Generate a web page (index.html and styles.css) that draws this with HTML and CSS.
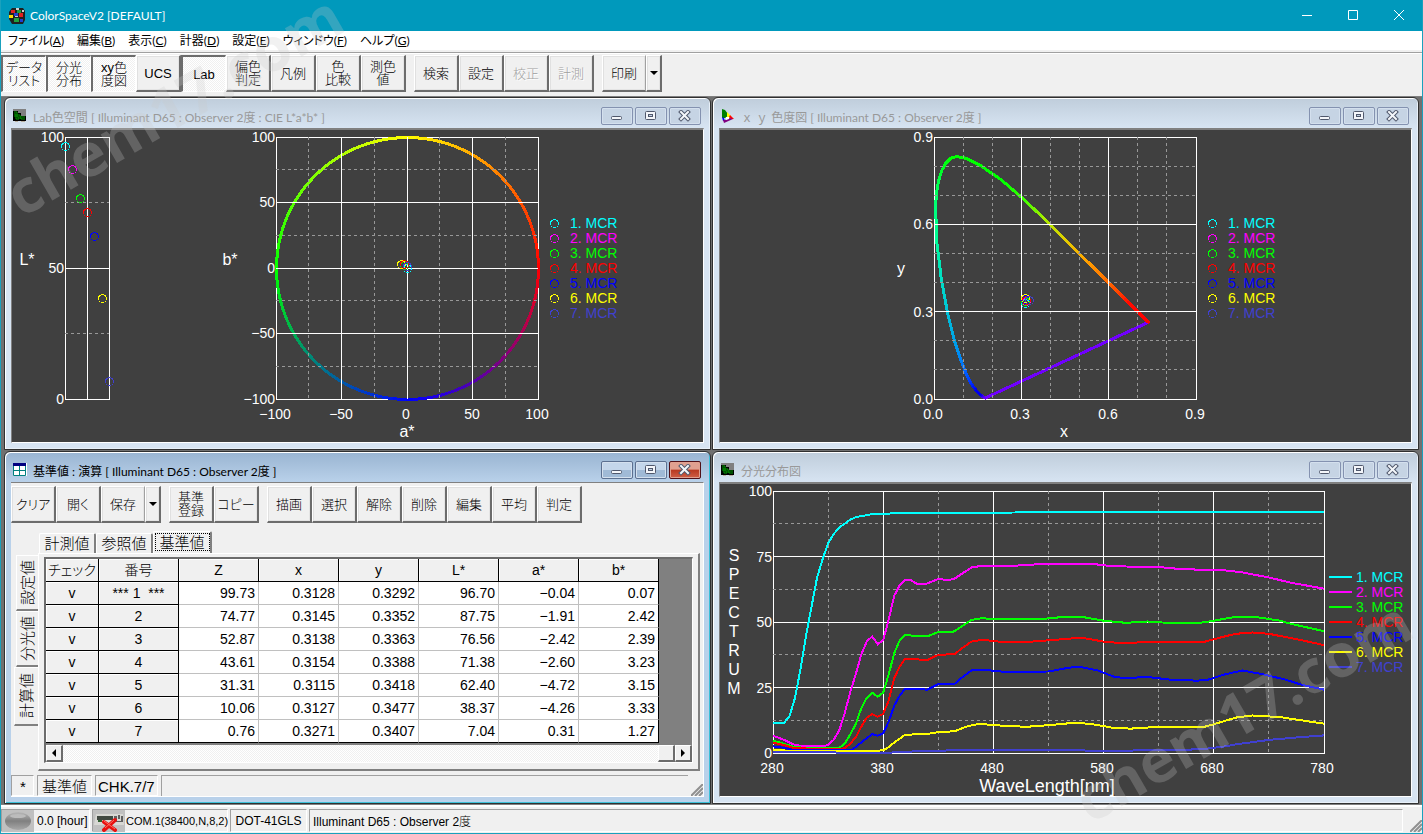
FILE: index.html
```html
<!DOCTYPE html>
<html lang="ja">
<head>
    <meta charset="UTF-8">
    <meta name="viewport" content="width=device-width, initial-scale=1.0">
    <title>ColorSpaceV2 [DEFAULT]</title>
    <link rel="stylesheet" href="styles.css">
</head>
<body>
    <!-- Shared icons -->
    <svg class="defs" width="0" height="0" aria-hidden="true">
        <symbol id="icoPlot" viewBox="0 0 14 14">
            <path fill="#808080" d="M0 0h13v12H0z"/>
            <path fill="#000" d="M0 2h5v2h3v3h5v5H0z"/>
            <path fill="none" stroke="#00a000" stroke-width="1" d="M1 3h3v3h3v2h5M1 7h4v2h3v1h4M1 5h2v5h3"/>
            <path fill="#b8b0a0" d="M2 12h3v1H2zM8 12h4v1H8z"/>
        </symbol>
        <symbol id="icoXy" viewBox="0 0 14 14">
            <path fill="#008000" d="M1 0l3 1 3 4 0 2-3 2-3 0z"/>
            <path fill="#ff0" d="M6 3l4 4-1 2-3-1z"/>
            <path fill="#f00" d="M9 6l4 4-3 0-2-2z"/>
            <path fill="#00f" d="M1 8l2 1 1 3-2 0z"/>
            <path fill="#800080" d="M2 11l2 0 5-2 3 1-9 4z"/>
            <path fill="#fff" d="M5 8l3 0 0 2-3 1z"/>
        </symbol>
        <symbol id="icoTable" viewBox="0 0 14 14">
            <path fill="#fff" d="M0 0h14v13H0z"/>
            <path fill="#000080" d="M0 0h13v3H0z"/>
            <path fill="none" stroke="#008080" d="M.5 3v9.500h12V3M6.500 3v9M1 7.500h12"/>
        </symbol>
        <symbol id="icoMin" viewBox="0 0 14 12">
            <rect x="1.500" y="6.500" width="10" height="3" rx="1" fill="#f4f6fa" stroke="#50586c"/>
        </symbol>
        <symbol id="icoMax" viewBox="0 0 14 12">
            <rect x="1.500" y="1.500" width="10" height="8" rx="1" fill="#f4f6fa" stroke="#50586c"/>
            <rect x="4.500" y="4.500" width="4" height="2" fill="#c4d2e4" stroke="#50586c"/>
        </symbol>
        <symbol id="icoClose" viewBox="0 0 14 12">
            <path d="M3 2l7 7M10 2l-7 7" stroke="#50586c" stroke-width="4" stroke-linecap="square"/>
            <path d="M3 2l7 7M10 2l-7 7" stroke="#f4f6fa" stroke-width="2" stroke-linecap="square"/>
        </symbol>
    </svg>

    <div class="app">
        <header class="titlebar">
            <svg class="app-icon" width="16" height="16" viewBox="0 0 16 16" aria-hidden="true">
                <path fill="#202020" d="M3 0h11l2 3v9l-2 4H3L0 11V4z"/>
                <path fill="#e02020" d="M2 2h4v3H2zM10 5h4v4h-4z"/>
                <path fill="#20a040" d="M8 2h4v3H8zM5 10h5v4H5z"/>
                <path fill="#2040d0" d="M5 5h4v3H5zM11 11h3v3h-3z"/>
                <path fill="#ffe000" d="M0 7h4v3H0z"/>
                <path fill="#d0d0d0" d="M7 0h3v2H7zM6 8h3v1H6zM13 2h2v2h-2z"/>
            </svg>
            <h1>ColorSpaceV2 [DEFAULT]</h1>
            <div class="window-controls">
                <button type="button" aria-label="最小化"><svg width="11" height="11"><path d="M0 5.500h10"/></svg></button>
                <button type="button" aria-label="最大化"><svg width="11" height="11"><path d="M.5.5h9v9h-9z"/></svg></button>
                <button type="button" aria-label="閉じる"><svg width="11" height="11"><path d="M0 0l10 10M10 0L0 10"/></svg></button>
            </div>
        </header>

        <nav class="menubar">
            <a href="#">ファイル(<u>A</u>)</a>
            <a href="#">編集(<u>B</u>)</a>
            <a href="#">表示(<u>C</u>)</a>
            <a href="#">計器(<u>D</u>)</a>
            <a href="#">設定(<u>E</u>)</a>
            <a href="#">ウィンドウ(<u>F</u>)</a>
            <a href="#">ヘルプ(<u>G</u>)</a>
        </nav>

        <div class="toolbar main-toolbar">
            <div class="group">
                <button type="button" class="pressed">データ<br>リスト</button>
                <button type="button" class="pressed">分光<br>分布</button>
                <button type="button" class="pressed">xy色<br>度図</button>
                <button type="button">UCS</button>
                <button type="button" class="pressed">Lab</button>
                <button type="button">偏色<br>判定</button>
                <button type="button">凡例</button>
                <button type="button">色<br>比較</button>
                <button type="button">測色<br>値</button>
            </div>
            <div class="group">
                <button type="button">検索</button>
                <button type="button">設定</button>
                <button type="button" disabled>校正</button>
                <button type="button" disabled>計測</button>
            </div>
            <div class="group">
                <button type="button" class="split">印刷</button>
                <button type="button" class="drop" aria-label="印刷メニュー"></button>
            </div>
        </div>

        <main class="workspace">
            <section class="window">
                <div class="window-title">
                    <svg width="14" height="14"><use href="#icoPlot"/></svg>
                    <h2>Lab色空間 [ Illuminant D65 : Observer 2度 : CIE L*a*b* ]</h2>
                    <div class="controls">
                        <button type="button" aria-label="最小化"><svg width="14" height="12"><use href="#icoMin"/></svg></button>
                        <button type="button" aria-label="最大化"><svg width="14" height="12"><use href="#icoMax"/></svg></button>
                        <button type="button" class="close" aria-label="閉じる"><svg width="14" height="12"><use href="#icoClose"/></svg></button>
                    </div>
                </div>
                <div class="window-body plot"><svg id="labChart" viewBox="0 0 691 312" preserveAspectRatio="xMinYMin meet"></svg></div>
            </section>

            <section class="window">
                <div class="window-title">
                    <svg width="14" height="14"><use href="#icoXy"/></svg>
                    <h2>ｘ ｙ 色度図 [ Illuminant D65 : Observer 2度 ]</h2>
                    <div class="controls">
                        <button type="button" aria-label="最小化"><svg width="14" height="12"><use href="#icoMin"/></svg></button>
                        <button type="button" aria-label="最大化"><svg width="14" height="12"><use href="#icoMax"/></svg></button>
                        <button type="button" class="close" aria-label="閉じる"><svg width="14" height="12"><use href="#icoClose"/></svg></button>
                    </div>
                </div>
                <div class="window-body plot"><svg id="xyChart" viewBox="0 0 691 312" preserveAspectRatio="xMinYMin meet"></svg></div>
            </section>

            <section class="window active">
                <div class="window-title">
                    <svg width="14" height="14"><use href="#icoTable"/></svg>
                    <h2>基準値 : 演算 [ Illuminant D65 : Observer 2度 ]</h2>
                    <div class="controls">
                        <button type="button" aria-label="最小化"><svg width="14" height="12"><use href="#icoMin"/></svg></button>
                        <button type="button" aria-label="最大化"><svg width="14" height="12"><use href="#icoMax"/></svg></button>
                        <button type="button" class="close" aria-label="閉じる"><svg width="14" height="12"><use href="#icoClose"/></svg></button>
                    </div>
                </div>
                <div class="window-body data">
                    <div class="toolbar">
                        <div class="group">
                            <button type="button">クリア</button>
                            <button type="button">開く</button>
                            <button type="button" class="split">保存</button>
                            <button type="button" class="drop" aria-label="保存メニュー"></button>
                        </div>
                        <div class="group">
                            <button type="button">基準<br>登録</button>
                            <button type="button">コピー</button>
                        </div>
                        <div class="group">
                            <button type="button">描画</button>
                            <button type="button">選択</button>
                            <button type="button">解除</button>
                            <button type="button">削除</button>
                            <button type="button">編集</button>
                            <button type="button">平均</button>
                            <button type="button">判定</button>
                        </div>
                    </div>

                    <div class="tab-area">
                        <div class="tabs" role="tablist">
                            <button type="button" role="tab">計測値</button>
                            <button type="button" role="tab">参照値</button>
                            <button type="button" role="tab" class="selected" aria-selected="true">基準値</button>
                        </div>
                        <div class="side-tabs" role="tablist">
                            <button type="button" role="tab"><span>設定値</span></button>
                            <button type="button" role="tab"><span>分光値</span></button>
                            <button type="button" role="tab" class="selected" aria-selected="true"><span>計算値</span></button>
                        </div>
                        <div class="panel">
                            <div class="sheet">
                                <table>
                                    <thead>
                                        <tr><th class="check">チェック</th><th>番号</th><th>Z</th><th>x</th><th>y</th><th>L*</th><th>a*</th><th>b*</th></tr>
                                    </thead>
                                    <tbody>
                                        <tr><th>v</th><th>*** 1 &nbsp;***</th><td>99.73</td><td>0.3128</td><td>0.3292</td><td>96.70</td><td>−0.04</td><td>0.07</td></tr>
                                        <tr><th>v</th><th>2</th><td>74.77</td><td>0.3145</td><td>0.3352</td><td>87.75</td><td>−1.91</td><td>2.42</td></tr>
                                        <tr><th>v</th><th>3</th><td>52.87</td><td>0.3138</td><td>0.3363</td><td>76.56</td><td>−2.42</td><td>2.39</td></tr>
                                        <tr><th>v</th><th>4</th><td>43.61</td><td>0.3154</td><td>0.3388</td><td>71.38</td><td>−2.60</td><td>3.23</td></tr>
                                        <tr><th>v</th><th>5</th><td>31.31</td><td>0.3115</td><td>0.3418</td><td>62.40</td><td>−4.72</td><td>3.15</td></tr>
                                        <tr><th>v</th><th>6</th><td>10.06</td><td>0.3127</td><td>0.3477</td><td>38.37</td><td>−4.26</td><td>3.33</td></tr>
                                        <tr><th>v</th><th>7</th><td>0.76</td><td>0.3271</td><td>0.3407</td><td>7.04</td><td>0.31</td><td>1.27</td></tr>
                                    </tbody>
                                </table>
                                <div class="scrollbar">
                                    <button type="button" aria-label="左へ"><i class="arrow left"></i></button>
                                    <div class="track"></div>
                                    <div class="thumb"></div>
                                    <button type="button" aria-label="右へ"><i class="arrow right"></i></button>
                                </div>
                            </div>
                        </div>
                    </div>

                    <div class="sheet-status">
                        <span class="mark">*</span>
                        <span>基準値</span>
                        <span class="chk">CHK.7/7</span>
                        <span class="rest"></span>
                        <svg class="grip" width="12" height="12"><path d="M0 12L12 0M4 12l8-8M8 12l4-4"/></svg>
                    </div>
                </div>
            </section>

            <section class="window">
                <div class="window-title">
                    <svg width="14" height="14"><use href="#icoPlot"/></svg>
                    <h2>分光分布図</h2>
                    <div class="controls">
                        <button type="button" aria-label="最小化"><svg width="14" height="12"><use href="#icoMin"/></svg></button>
                        <button type="button" aria-label="最大化"><svg width="14" height="12"><use href="#icoMax"/></svg></button>
                        <button type="button" class="close" aria-label="閉じる"><svg width="14" height="12"><use href="#icoClose"/></svg></button>
                    </div>
                </div>
                <div class="window-body plot"><svg id="spectrumChart" viewBox="0 0 691 312" preserveAspectRatio="xMinYMin meet"></svg></div>
            </section>
        </main>

        <footer class="statusbar">
            <span class="lamp-cell">
                <svg width="32" height="22" viewBox="0 0 32 22" aria-hidden="true">
                    <defs>
                        <linearGradient id="lamp" x1="0" y1="0" x2="0" y2="1">
                            <stop offset="0" stop-color="#b8b8b8"/>
                            <stop offset=".5" stop-color="#808080"/>
                            <stop offset="1" stop-color="#a8a8a8"/>
                        </linearGradient>
                    </defs>
                    <path fill="#c0c0c0" d="M0 0h32v22H0z"/>
                    <ellipse cx="16" cy="11" rx="13" ry="9" fill="url(#lamp)"/>
                    <ellipse cx="16" cy="6" rx="8" ry="2" fill="#bcbcbc"/>
                </svg>
                0.0 [hour]
            </span>
            <span class="port-cell">
                <svg width="32" height="22" viewBox="0 0 32 22" aria-hidden="true">
                    <path fill="#c0c0c0" d="M0 0h32v22H0z"/>
                    <path fill="#d8d8d4" d="M3 4h27l1 11H1z"/>
                    <path fill="#404840" d="M4 6h16v4H4z"/>
                    <path fill="#306030" d="M5 10h4v2H5z"/>
                    <path fill="#606060" d="M21 6h3v6h-3zM25 5h2v4h-2zM28 6h2v6h-2zM24 11h4v1h-4z"/>
                    <path stroke="#e81010" stroke-width="4" stroke-linecap="round" d="M11 12l11 8M22 10L11 20"/>
                    <path stroke="#ff7060" d="M11 11l11 8M21 10L12 18"/>
                </svg>
                COM.1(38400,N,8,2)
            </span>
            <span class="model-cell">DOT-41GLS</span>
            <span class="rest">Illuminant D65 : Observer 2度</span>
            <svg class="grip" width="12" height="12"><path d="M0 12L12 0M4 12l8-8M8 12l4-4"/></svg>
        </footer>

        <div class="watermark" aria-hidden="true">
            <span class="mark-top">chem17.com</span>
            <span class="mark-bottom">chem17.com</span>
        </div>
    </div>

    <script src="charts.js"></script>
</body>
</html>
```
FILE: styles.css
```css
* {
    margin: 0;
    padding: 0;
    box-sizing: border-box;
}

html,
body {
    height: 100%;
}

body {
    font-family: "Liberation Sans", "Noto Sans CJK JP", sans-serif;
    font-size: 14px;
    font-weight: 300;
    color: #000;
    background-color: #f0f0f0;
}

button {
    font: inherit;
    color: inherit;
    background: none;
    border: none;
}

a {
    color: inherit;
    text-decoration: none;
}

.defs {
    position: absolute;
}

.app {
    position: relative;
    display: flex;
    flex-direction: column;
    min-height: 100vh;
    border: 1px solid #1aa1bd;
    border-top: none;
    overflow: hidden;
}

/* Title bar */
.titlebar {
    display: flex;
    align-items: center;
    height: 31px;
    padding-left: 8px;
    background-color: #0099bc;
    color: #fff;
}

.titlebar h1 {
    flex: 1;
    margin-left: 5px;
    font: 12px Lato, "Noto Sans CJK JP", sans-serif;
}

.window-controls {
    display: flex;
}

.window-controls button {
    width: 46px;
    height: 30px;
}

.window-controls path {
    fill: none;
    stroke: #fff;
}

/* Menu */
.menubar {
    display: flex;
    gap: 13px;
    height: 22px;
    padding-left: 7px;
    background-color: #fff;
    border-bottom: 1px solid #a0a0a0;
    box-shadow: inset 0 -2px #f0f0f0;
    font: 12px/20px Lato, "Noto Sans CJK JP", sans-serif;
    font-feature-settings: "palt";
}

/* Toolbars */
.toolbar {
    display: flex;
    gap: 8px;
    padding: 3px 0 0;
}

.main-toolbar {
    height: 43px;
    padding-top: 1px;
    border-top: 1px solid #fff;
}

.group {
    display: flex;
}

.toolbar button {
    width: 45px;
    height: 37px;
    background-color: #f0f0f0;
    border: 1px solid #fff;
    border-right: 2px solid #6c6c6c;
    border-bottom: 2px solid #6c6c6c;
    box-shadow: inset 1px 1px #e0e0e0, inset -1px -1px #e4e4e4;
    font-size: 13px;
    line-height: 13px;
    font-feature-settings: "palt";
    white-space: nowrap;
}

.toolbar .pressed {
    border: 1px solid #fff;
    border-top: 2px solid #6c6c6c;
    border-left: 2px solid #6c6c6c;
    background: repeating-conic-gradient(#fff 0 25%, #f0f0f0 0 50%) 0 0 / 2px 2px;
    box-shadow: none;
}

.toolbar button:disabled {
    color: #a0a0a0;
    text-shadow: 1px 1px #fff;
}

.toolbar .split {
    width: 44px;
    border-right: 1px solid #a0a0a0;
}

.toolbar .drop {
    display: flex;
    align-items: center;
    justify-content: center;
    width: 16px;
}

.drop::before {
    content: "";
    border: 4px solid transparent;
    border-top-color: #000;
    border-bottom: none;
}

/* Child windows */
.workspace {
    flex: 1;
    display: grid;
    grid-template-columns: 1fr 1fr;
    grid-template-rows: 1fr 1fr;
    gap: 1px;
    padding: 0 3px;
    border-top: 1px solid #808080;
    background-color: #707070;
}

.window {
    display: flex;
    flex-direction: column;
    min-width: 0;
    padding: 0 6px 6px;
    border: 1px solid #303030;
    border-radius: 6px 6px 0 0;
    background: linear-gradient(#bfcddb, #d7e4f2 30px);
    box-shadow: inset 1px 1px #fff, inset -1px -1px #e8f0f8;
}

.window.active {
    background: linear-gradient(#99b4d1, #b9d1ea 30px);
    box-shadow: inset 1px 1px #fff, inset -1px -1px #3cc0d8;
}

.window-title {
    display: flex;
    align-items: center;
    height: 30px;
    padding: 6px 3px 0 2px;
    color: #999;
}

.window.active .window-title {
    color: #000;
}

.window-title h2 {
    flex: 1;
    margin-left: 6px;
    font: 12px Lato, "Noto Sans CJK JP", sans-serif;
    white-space: nowrap;
}

.controls {
    display: flex;
    gap: 2px;
}

.controls button {
    display: flex;
    align-items: center;
    justify-content: center;
    width: 32px;
    height: 18px;
    border: 1px solid #8492b0;
    border-radius: 2px;
    background-color: #c6d4e4;
    box-shadow: inset 0 0 0 1px #d4e0ee;
}

.active .controls button {
    border-color: #5c7090;
    background: linear-gradient(#c4d6ea 50%, #a0bad6 50%);
}

.active .controls .close {
    border-color: #501018;
    background: linear-gradient(#e0a090 45%, #b83820 50%, #d06048);
    box-shadow: inset 0 0 0 1px #e0a090;
}

.window-body {
    flex: 1;
    min-height: 0;
    border: 1px solid #808080;
    border-right-color: #fff;
    border-bottom-color: #fff;
}

.plot {
    border-top-width: 2px;
    background-color: #404040;
}

.plot svg {
    display: block;
    width: 100%;
    height: 100%;
}

.plot text {
    font-family: "Liberation Sans", sans-serif;
    font-size: 14px;
    fill: #fff;
}

.plot .axis-name {
    font-size: 16px;
}

.plot .wave-name {
    font-size: 18px;
}

.plot .solid {
    fill: none;
    stroke: #fff;
    shape-rendering: crispEdges;
}

.plot .dashed {
    stroke: #989898;
    stroke-dasharray: 3 3;
    shape-rendering: crispEdges;
}

.plot .curve {
    fill: none;
    stroke-width: 2;
    shape-rendering: crispEdges;
}

.plot .locus {
    stroke-width: 3;
    stroke-linecap: round;
    shape-rendering: crispEdges;
}

.plot .marker {
    fill: none;
    shape-rendering: crispEdges;
}

/* Data window */
.data {
    display: flex;
    flex-direction: column;
    border-left: none;
    background-color: #f0f0f0;
}

.tab-area {
    flex: 1;
    display: grid;
    grid-template-columns: 27px 1fr;
    grid-template-rows: 22px 1fr;
    padding: 8px 3px 0 0;
}

.tabs {
    grid-column: 2;
    display: flex;
    align-items: flex-end;
    padding-left: 1px;
}

.tabs button {
    width: 57px;
    height: 20px;
    border: 1px solid #fff;
    border-right: 2px solid #808080;
    border-bottom: none;
    border-radius: 2px 2px 0 0;
    font-size: 15px;
    line-height: 18px;
}

.tabs .selected {
    width: 59px;
    height: 22px;
    outline: 1px dotted #000;
    outline-offset: -3px;
}

.side-tabs {
    grid-row: 2;
    display: flex;
    flex-direction: column;
    align-items: flex-end;
    padding-top: 2px;
}

.side-tabs button {
    display: flex;
    align-items: center;
    justify-content: center;
    width: 22px;
    height: 56px;
    border: 1px solid #fff;
    border-right: none;
    border-bottom: 2px solid #808080;
    font-size: 15px;
    line-height: 18px;
}

.side-tabs .selected {
    width: 24px;
    height: 59px;
}

.side-tabs span {
    writing-mode: vertical-rl;
    text-orientation: sideways;
    transform: rotate(180deg);
}

.panel {
    display: flex;
    padding: 3px 5px 6px;
    border: 1px solid #fff;
    border-right: 2px solid #808080;
    border-bottom: 2px solid #808080;
}

.sheet {
    flex: 1;
    display: flex;
    flex-direction: column;
    align-items: flex-start;
    border: 2px solid #6c6c6c;
    border-right: 1px solid #fff;
    border-bottom: 1px solid #fff;
    background-color: #808080;
}

.sheet table {
    border-collapse: separate;
    border-spacing: 0;
    table-layout: fixed;
    width: 613px;
    background-color: #fff;
}

.sheet th,
.sheet td {
    width: 80px;
    height: 23px;
    font-size: 14px;
    line-height: 20px;
    white-space: nowrap;
}

.sheet th {
    border-right: 1px solid #000;
    border-bottom: 1px solid #000;
    box-shadow: inset 1px 1px #fff;
    background-color: #f0f0f0;
    font-weight: 300;
    text-align: center;
}

.sheet .check {
    width: 53px;
    font-feature-settings: "palt";
}

.sheet td {
    padding-right: 3px;
    border-right: 1px solid #c0c0c0;
    border-bottom: 1px solid #c0c0c0;
    text-align: right;
}

.sheet td:last-child {
    border-right-color: #000;
}

.sheet tr:last-child td {
    border-bottom-color: #000;
}

.scrollbar {
    display: flex;
    width: 100%;
    height: 17px;
    margin-top: auto;
}

.scrollbar button,
.thumb {
    display: flex;
    align-items: center;
    justify-content: center;
    width: 17px;
    height: 17px;
    border: 1px solid #fff;
    border-right: 2px solid #6c6c6c;
    border-bottom: 2px solid #6c6c6c;
    background-color: #f0f0f0;
}

.track {
    flex: 1;
    background: repeating-conic-gradient(#fff 0 25%, #f0f0f0 0 50%) 0 0 / 2px 2px;
}

.arrow {
    border: 4px solid transparent;
}

.arrow.left {
    border-left: none;
    border-right-color: #000;
}

.arrow.right {
    border-right: none;
    border-left-color: #000;
}

.sheet-status {
    display: flex;
    align-items: flex-end;
    gap: 3px;
    height: 21px;
    margin-top: 4px;
    font-size: 15px;
    line-height: 21px;
}

.sheet-status span {
    height: 21px;
    padding: 0 4px;
    border: 1px solid #a0a0a0;
    border-right-color: #fff;
    border-bottom-color: #fff;
    white-space: nowrap;
}

.sheet-status .mark {
    width: 23px;
    padding: 0 8px;
}

.sheet-status .chk {
    padding: 0 2px;
}

.sheet-status .rest {
    flex: 1;
    border-right: none;
    border-bottom: none;
}

.grip path {
    stroke: #909090;
    stroke-width: 2;
}

/* Status bar */
.statusbar {
    display: flex;
    align-items: flex-end;
    gap: 2px;
    height: 29px;
    padding-bottom: 1px;
    border-top: 1px solid #808080;
    box-shadow: inset 0 2px #fff;
    background-color: #f0f0f0;
    font-size: 12px;
}

.statusbar span {
    display: flex;
    align-items: center;
    gap: 3px;
    height: 23px;
    border: 1px solid #a0a0a0;
    border-right-color: #fff;
    border-bottom-color: #fff;
    white-space: nowrap;
}

.statusbar svg {
    flex: none;
}

.lamp-cell {
    width: 89px;
}

.statusbar .port-cell {
    width: 136px;
    gap: 1px;
    font-size: 11px;
}

.model-cell {
    justify-content: center;
    width: 77px;
}

.statusbar .rest {
    flex: 1;
    padding-left: 3px;
}

.statusbar .grip {
    margin-left: 5px;
}

/* Watermark */
.watermark {
    position: absolute;
    inset: 0;
    overflow: hidden;
    pointer-events: none;
    color: rgba(200, 200, 200, 0.26);
    font: bold 60px/60px "Open Sans", sans-serif;
}

.watermark span {
    position: absolute;
    transform: rotate(-30deg);
    transform-origin: 0 54px;
}

.mark-top {
    left: 21px;
    top: 165px;
}

.mark-bottom {
    right: -46px;
    bottom: 2px;
}
```
FILE: charts.js
```js
const NS = 'http://www.w3.org/2000/svg';
const COLORS = ['#00ffff', '#ff00ff', '#00ff00', '#ff0000', '#0000ff', '#ffff00', '#4040d0'];

const SAMPLES = [
    { x: 0.3128, y: 0.3292, L: 96.70, a: -0.04, b: 0.07 },
    { x: 0.3145, y: 0.3352, L: 87.75, a: -1.91, b: 2.42 },
    { x: 0.3138, y: 0.3363, L: 76.56, a: -2.42, b: 2.39 },
    { x: 0.3154, y: 0.3388, L: 71.38, a: -2.60, b: 3.23 },
    { x: 0.3115, y: 0.3418, L: 62.40, a: -4.72, b: 3.15 },
    { x: 0.3127, y: 0.3477, L: 38.37, a: -4.26, b: 3.33 },
    { x: 0.3271, y: 0.3407, L: 7.04, a: 0.31, b: 1.27 }
];

// Spectral locus: x, y, r, g, b
const LOCUS = [
    [0.1741, 0.0050, 112, 0, 255], [0.1644, 0.0109, 70, 0, 240], [0.1566, 0.0177, 0, 0, 230],
    [0.1440, 0.0297, 0, 0, 240], [0.1241, 0.0578, 0, 50, 255], [0.1096, 0.0868, 0, 90, 255],
    [0.0913, 0.1327, 0, 130, 245], [0.0687, 0.2007, 0, 165, 230], [0.0454, 0.2950, 0, 195, 215],
    [0.0235, 0.4127, 0, 225, 195], [0.0082, 0.5384, 0, 250, 150], [0.0039, 0.6548, 0, 255, 120],
    [0.0060, 0.7060, 0, 255, 95], [0.0139, 0.7502, 0, 255, 70], [0.0245, 0.7860, 0, 255, 40],
    [0.0389, 0.8120, 0, 255, 20], [0.0560, 0.8290, 0, 255, 0],
    [0.0743, 0.8338, 0, 255, 0], [0.0940, 0.8320, 0, 255, 0], [0.1142, 0.8262, 0, 255, 0],
    [0.1547, 0.8059, 0, 255, 0], [0.2296, 0.7543, 0, 255, 0], [0.3016, 0.6923, 60, 255, 0],
    [0.3731, 0.6245, 170, 235, 0], [0.4441, 0.5547, 225, 205, 0], [0.5125, 0.4866, 255, 165, 0],
    [0.5752, 0.4242, 255, 120, 0], [0.6270, 0.3725, 255, 70, 0], [0.6658, 0.3340, 255, 10, 0],
    [0.7347, 0.2653, 255, 0, 0]
];

// Wavelength, reflectance pairs
const SPECTRA = [
    [280, 11.5, 290, 11.5, 295, 14, 300, 21, 305, 32, 310, 45, 315, 56, 320, 67, 325, 74, 330, 80, 335, 83.5, 340, 86, 345, 87.5, 350, 89, 355, 90, 370, 91.2, 400, 91.6, 500, 91.8, 600, 92, 660, 91.9, 780, 92],
    [280, 6.6, 290, 5, 300, 3, 310, 2.5, 325, 2.6, 330, 3, 335, 5, 340, 8.5, 345, 15, 350, 23, 355, 30, 360, 37.5, 365, 42.5, 370, 44.5, 375, 41.5, 380, 43, 385, 51, 390, 60, 395, 64, 400, 66.2, 405, 66, 410, 64.7, 420, 64.7, 430, 66.4, 440, 66, 445, 66.6, 450, 68, 460, 70.8, 470, 71.5, 500, 71.5, 530, 72.3, 570, 72.2, 580, 71.6, 600, 71.2, 630, 71, 650, 70.2, 690, 69.7, 705, 69, 730, 67, 750, 65, 780, 62.7],
    [280, 4.7, 290, 3.5, 300, 2.2, 310, 2, 330, 1.8, 340, 2, 345, 3.5, 350, 7, 355, 11, 360, 17, 365, 21, 370, 23, 375, 21.5, 380, 23, 385, 30, 390, 38, 395, 43, 400, 45.2, 410, 44.5, 420, 44.5, 430, 46.2, 440, 46, 445, 46.5, 450, 48, 460, 50.8, 470, 51.5, 480, 51, 520, 51, 545, 52, 560, 52, 580, 50.5, 600, 49.7, 620, 50.2, 640, 49.6, 665, 49.5, 680, 50.5, 700, 52, 720, 51.8, 740, 50.5, 750, 49.3, 780, 46.5],
    [280, 4, 290, 3, 300, 1.8, 340, 1.5, 345, 1.8, 350, 3.5, 355, 6, 360, 10, 365, 13.5, 370, 14.8, 375, 13.8, 380, 15, 385, 20, 390, 28.5, 395, 33, 400, 36, 420, 35.5, 430, 37.5, 445, 37.7, 450, 39.5, 460, 42.5, 470, 43.2, 485, 42.5, 515, 42.5, 560, 44, 580, 42.5, 600, 41.8, 620, 42.5, 670, 42.3, 690, 44.5, 700, 45.5, 715, 46, 730, 45.5, 760, 43, 780, 41.2],
    [280, 2.5, 290, 2, 300, 1, 345, 1, 352, 1.3, 360, 4, 370, 7.2, 375, 6.6, 380, 7.5, 385, 12, 390, 18, 395, 22, 400, 24.5, 420, 24.2, 430, 26.3, 445, 26.4, 450, 28.3, 460, 31.5, 470, 31.8, 490, 31, 530, 31.1, 545, 32.3, 557, 33, 575, 31.5, 590, 29, 600, 28.6, 620, 29, 640, 28, 665, 27.6, 675, 28, 690, 30, 706, 31.5, 725, 30, 745, 28, 760, 26, 780, 24.2],
    [280, 1, 360, 0.7, 380, 1, 385, 2.3, 390, 4, 400, 7, 420, 7.2, 430, 8, 445, 8.3, 455, 10, 467, 11.2, 480, 10.6, 510, 10, 530, 10.6, 555, 11.6, 570, 11, 590, 9.5, 605, 9.3, 630, 10, 670, 9.8, 680, 11, 700, 13.5, 715, 14.3, 740, 13.7, 780, 11.2],
    [280, 0.5, 350, 0.1, 380, 0, 400, 0.5, 440, 1, 470, 1.2, 520, 1, 600, 0.9, 650, 1.2, 670, 1.5, 690, 2.5, 700, 3.3, 730, 5, 760, 6.1, 780, 6.7]
];

function el(parent, name, attrs, text) {
    const node = document.createElementNS(NS, name);
    for (const key in attrs) {
        node.setAttribute(key, attrs[key]);
    }
    if (text !== undefined) {
        node.textContent = text;
    }
    parent.appendChild(node);
    return node;
}

function line(svg, x1, y1, x2, y2, cls, color) {
    const attrs = { x1, y1, x2, y2, class: cls };
    if (color) {
        attrs.stroke = color;
    }
    el(svg, 'line', attrs);
}

// Text centred vertically on y
function label(svg, x, y, text, anchor, cls) {
    el(svg, 'text', { x, y: y + 5, 'text-anchor': anchor || 'middle', class: cls || '' }, text);
}

function marker(svg, x, y, color) {
    el(svg, 'circle', { cx: x, cy: y, r: 4, stroke: color, class: 'marker' });
}

function grid(svg, box, cols, rows, colEvery, rowEvery) {
    for (const dashed of [true, false]) {
        for (let i = 1; i < cols; i++) {
            if ((i % colEvery !== 0) === dashed) {
                const x = Math.floor(box.x + box.w * i / cols) + 0.5;
                line(svg, x, box.y, x, box.y + box.h, dashed ? 'dashed' : 'solid');
            }
        }
        for (let i = 1; i < rows; i++) {
            if ((i % rowEvery !== 0) === dashed) {
                const y = Math.floor(box.y + box.h * i / rows) + 0.5;
                line(svg, box.x, y, box.x + box.w, y, dashed ? 'dashed' : 'solid');
            }
        }
    }
}

function frame(svg, box) {
    el(svg, 'rect', { x: box.x + 0.5, y: box.y + 0.5, width: box.w, height: box.h, class: 'solid' });
}

function legend(svg, x, textX, useLine) {
    COLORS.forEach((color, i) => {
        const y = 93 + i * 15;
        if (useLine) {
            line(svg, x, y, x + 23, y, 'curve', color);
        } else {
            marker(svg, x, y + 0.5, color);
        }
        const text = el(svg, 'text', { x: textX, y: y + 5 }, (i + 1) + '. MCR');
        text.style.fill = color;
    });
}

function mix(c1, c2, t) {
    return 'rgb(' + c1.map((v, i) => Math.round(v + (c2[i] - v) * t)).join(',') + ')';
}

function drawLab() {
    const svg = document.getElementById('labChart');
    const bar = { x: 53, y: 7, w: 44, h: 262 };
    const box = { x: 264, y: 7, w: 262, h: 262 };

    // Lightness bar
    frame(svg, bar);
    grid(svg, bar, 2, 4, 1, 2);
    SAMPLES.forEach((s, i) => {
        marker(svg, bar.x + 0.5 + Math.round(bar.w * i / 6), Math.round(bar.y + bar.h * (1 - s.L / 100)) + 0.5, COLORS[i]);
    });
    ['100', '50', '0'].forEach((t, i) => label(svg, 52, 7 + i * 131, t, 'end'));
    label(svg, 15, 130, 'L*', 'middle', 'axis-name');

    // Hue circle
    frame(svg, box);
    const wheel = [[255, 0, 0], [255, 255, 0], [0, 255, 0], [0, 0, 255], [255, 0, 0]];
    const cx = 395.5;
    const cy = 138.5;
    for (let deg = 0; deg < 360; deg += 3) {
        const p = [deg, deg + 3].map(d => [cx + 131 * Math.cos(d * Math.PI / 180), cy - 131 * Math.sin(d * Math.PI / 180)]);
        const q = Math.floor(deg / 90);
        line(svg, p[0][0], p[0][1], p[1][0], p[1][1], 'locus', mix(wheel[q], wheel[q + 1], (deg % 90) / 90));
    }
    grid(svg, box, 8, 8, 2, 2);
    SAMPLES.forEach((s, i) => marker(svg, cx + Math.round(s.a * 1.31), cy - Math.round(s.b * 1.31), COLORS[i]));

    ['−100', '−50', '0', '50', '100'].forEach((t, i) => {
        label(svg, 263 + Math.round(i * 65.5), 284, t);
        label(svg, 263, 269 - Math.round(i * 65.5), t, 'end');
    });
    label(svg, 395, 302, 'a*', 'middle', 'axis-name');
    label(svg, 218, 130, 'b*', 'middle', 'axis-name');
    legend(svg, 542.5, 558);
}

function drawXy() {
    const svg = document.getElementById('xyChart');
    const box = { x: 214, y: 7, w: 262, h: 262 };
    const px = x => box.x + 0.5 + box.w * x / 0.9;
    const py = y => box.y + 0.5 + box.h * (1 - y / 0.9);

    frame(svg, box);
    line(svg, px(LOCUS[0][0]), py(LOCUS[0][1]), px(0.7347), py(0.2653), 'locus', '#7000ff');
    for (let i = 0; i < LOCUS.length - 1; i++) {
        const a = LOCUS[i];
        const b = LOCUS[i + 1];
        for (let k = 0; k < 4; k++) {
            const x1 = a[0] + (b[0] - a[0]) * k / 4;
            const y1 = a[1] + (b[1] - a[1]) * k / 4;
            const x2 = a[0] + (b[0] - a[0]) * (k + 1) / 4;
            const y2 = a[1] + (b[1] - a[1]) * (k + 1) / 4;
            line(svg, px(x1), py(y1), px(x2), py(y2), 'locus', mix(a.slice(2), b.slice(2), k / 4));
        }
    }
    grid(svg, box, 9, 9, 3, 3);
    SAMPLES.forEach((s, i) => marker(svg, Math.floor(px(s.x)) + 0.5, Math.floor(py(s.y)) + 0.5, COLORS[i]));

    ['0.0', '0.3', '0.6', '0.9'].forEach((t, i) => {
        label(svg, 213 + Math.round(i * 87.3), 284, t);
        label(svg, 213, 269 - Math.round(i * 87.3), t, 'end');
    });
    label(svg, 344, 302, 'x', 'middle', 'axis-name');
    label(svg, 181, 139, 'y', 'middle', 'axis-name');
    legend(svg, 492.5, 508);
}

function drawSpectrum() {
    const svg = document.getElementById('spectrumChart');
    const box = { x: 53, y: 7, w: 551, h: 262 };

    frame(svg, box);
    grid(svg, box, 10, 8, 2, 2);
    SPECTRA.forEach((data, i) => {
        const points = [];
        for (let k = 0; k < data.length; k += 2) {
            points.push((box.x + box.w * (data[k] - 280) / 500).toFixed(1) + ',' + (box.y + box.h * (1 - data[k + 1] / 100)).toFixed(1));
        }
        el(svg, 'polyline', { points: points.join(' '), stroke: COLORS[i], class: 'curve' });
    });

    for (let i = 0; i <= 5; i++) {
        label(svg, 52 + i * 110, 284, String(280 + i * 100));
    }
    ['100', '75', '50', '25', '0'].forEach((t, i) => label(svg, 52, 7 + Math.round(i * 65.5), t, 'end'));
    'SPECTRUM'.split('').forEach((c, i) => label(svg, 14, 72 + i * 19, c, 'middle', 'axis-name'));
    label(svg, 327, 303, 'WaveLength[nm]', 'middle', 'wave-name');
    legend(svg, 609, 636, true);
}

drawLab();
drawXy();
drawSpectrum();
```
